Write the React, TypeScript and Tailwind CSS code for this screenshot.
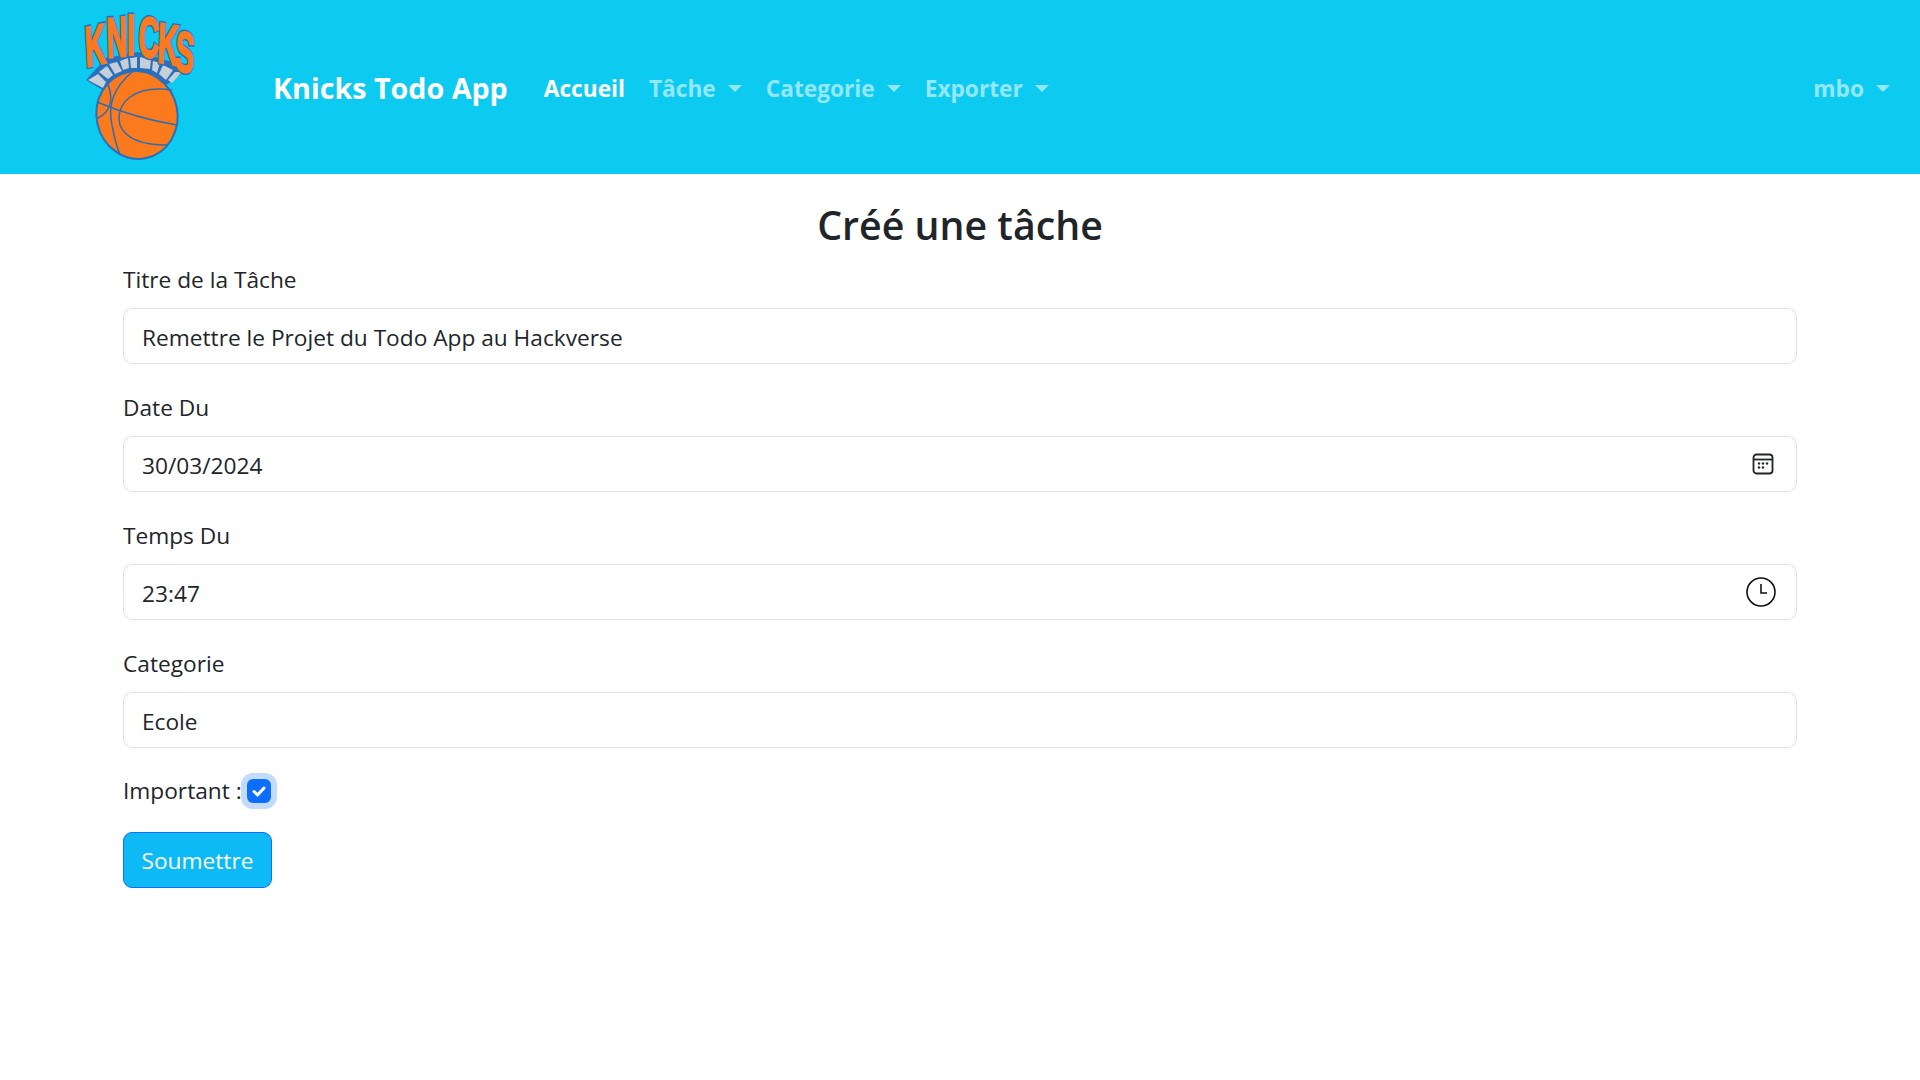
function KnicksLogo() {
  const wedges = [
    "28,80 38,74 46,82 43,88",
    "39,72 47,66 53,75 48,79",
    "49,64 57,62 62,71 55,74",
    "60,61 68,58 69,68 63,70",
    "70,58 77,57 77,68 71,68",
    "80,57 91,60 90,69 80,68",
    "93,61 100,63 97,73 92,70",
    "103,65 113,70 106,80 99,74",
    "115,72 122,72 112,83 108,80",
  ]
  // glyph positions are divided by the horizontal squeeze of the word
  const sx = 0.5
  const xs = [26, 47, 67, 78, 97, 114].map((x) => (x / sx).toFixed(1)).join(" ")
  const ys = "67 58 55 56 62 69"
  const rotates = "-6 -3 0 3 5 8"

  return (
    <svg viewBox="20 0 120 174" className="w-[120px] h-[174px] shrink-0">
      <path d="M26 80 L46 58 L78 52 L112 62 L124 72 L108 84 L46 92 Z" fill="#2a6fbb" />
      {wedges.map((p) => (
        <polygon key={p} points={p} fill="#c6ced8" />
      ))}
      <g transform={`scale(${sx} 1)`} fontFamily="Liberation Sans, sans-serif" fontWeight="700" fontSize="57">
        <text x={xs} y={ys} rotate={rotates} fill="#2a6fbb" stroke="#2a6fbb" strokeWidth="5">KNICKS</text>
        <text x={xs} y={ys} rotate={rotates} fill="#f97a1f" stroke="#f97a1f" strokeWidth="2">KNICKS</text>
      </g>
      <ellipse cx="77" cy="115" rx="40.5" ry="44" transform="rotate(-12 77 115)" fill="#fb7a1e" stroke="#2a6fbb" strokeWidth="2" />
      <g fill="none" stroke="#2f6db0" strokeWidth="1.5">
        <path d="M37 102 Q75 118 117 125" />
        <path d="M72 72 Q45 95 52 125 Q55 142 60 155" />
        <path d="M112 90 Q85 86 70 97 Q56 108 60 125 Q68 145 107 145" />
        <path d="M48 84 Q53 98 49 107 Q46 114 38 118" />
      </g>
    </svg>
  )
}

function NavDropdown({ label }: { label: string }) {
  return (
    <a href="#" className="flex items-center gap-[12px] text-white/55">
      {label}
      <span className="w-0 h-0 mt-[-2px] border-x-[7px] border-x-transparent border-t-[7px] border-t-white/55" />
    </a>
  )
}

function Field({ label, value, icon }: { label: string; value: string; icon?: React.ReactNode }) {
  return (
    <div className="mb-[26px]">
      <label className="block mb-[10px] h-[36px] leading-[36px]">{label}</label>
      <div className="flex items-center justify-between h-[56px] px-[18px] border border-[#dee2e6] rounded-[9px] bg-white">
        <input readOnly value={value} className="flex-1 pt-[4px] outline-none bg-transparent" />
        {icon}
      </div>
    </div>
  )
}

export default function App() {
  return (
    <div className="min-h-screen bg-white text-[#212529] text-[22.7px] font-['Open_Sans',sans-serif]">
      <nav className="flex items-center h-[174px] bg-[#0dcaf0] pl-[80px] pr-[30px] font-bold">
        <KnicksLogo />
        <a href="#" className="ml-[73px] mr-[36px] pt-[2px] text-white text-[28.7px]">Knicks Todo App</a>
        <div className="flex items-center gap-[24px] pt-[5px]">
          <a href="#" className="text-white">Accueil</a>
          <NavDropdown label="Tâche" />
          <NavDropdown label="Categorie" />
          <NavDropdown label="Exporter" />
        </div>
        <div className="ml-auto pt-[5px]">
          <NavDropdown label="mbo" />
        </div>
      </nav>

      <main className="px-[123px]">
        <h1 className="text-center text-[39.3px] font-semibold leading-[48px] mt-[27px] mb-[13px]">Créé une tâche</h1>
        <form>
          <Field label="Titre de la Tâche" value="Remettre le Projet du Todo App au Hackverse" />
          <Field
            label="Date Du"
            value="30/03/2024"
            icon={
              <svg viewBox="0 0 24 24" className="w-[24px] h-[24px] mr-[3px]" fill="none" stroke="#212529" strokeWidth="1.8">
                <rect x="2.5" y="2.5" width="19" height="19" rx="3" />
                <path d="M2.5 7.5 H21.5" />
                <g fill="#212529" stroke="none">
                  <circle cx="8" cy="11.5" r="1.2" />
                  <circle cx="12" cy="11.5" r="1.2" />
                  <circle cx="16" cy="11.5" r="1.2" />
                  <circle cx="8" cy="15.5" r="1.2" />
                  <circle cx="12" cy="15.5" r="1.2" />
                </g>
              </svg>
            }
          />
          <Field
            label="Temps Du"
            value="23:47"
            icon={
              <svg viewBox="0 0 30 30" className="w-[30px] h-[30px] mr-[2px]" fill="none" stroke="#111" strokeWidth="1.6">
                <circle cx="15" cy="15" r="14" />
                <path d="M15 7 V16 H21" />
              </svg>
            }
          />
          <Field label="Categorie" value="Ecole" />
          <div className="flex items-center h-[36px] mt-[-1px] mb-[23px]">
            <span>Important :</span>
            <span className="ml-[5px] mt-[-1px] flex items-center justify-center w-[24px] h-[24px] rounded-[6px] bg-[#0d6efd] shadow-[0_0_0_6px_#c2dbfe]">
              <svg viewBox="0 0 20 20" className="w-[20px] h-[20px]" fill="none" stroke="white" strokeWidth="3" strokeLinecap="round" strokeLinejoin="round">
                <path d="M5 10.5 L8.5 14 L15 7" />
              </svg>
            </span>
          </div>
          <button type="button" className="h-[56px] w-[149px] pt-[2px] rounded-[9px] bg-[#0dbaf5] border border-[#0d6efd] text-white">Soumettre</button>
        </form>
      </main>
    </div>
  )
}
